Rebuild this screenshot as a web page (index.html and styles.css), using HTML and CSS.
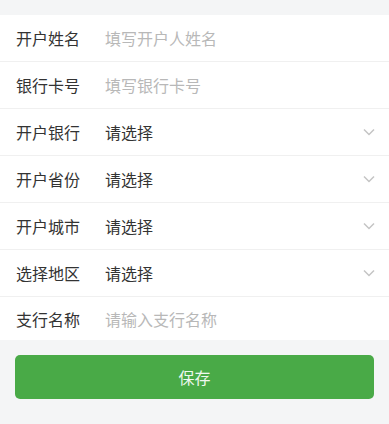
FILE: index.html
```html
<!DOCTYPE html>
<html lang="zh-CN">
<head>
    <meta charset="UTF-8">
    <meta name="viewport" content="width=device-width, initial-scale=1.0">
    <title>银行卡信息</title>
    <link rel="stylesheet" href="styles.css">
</head>
<body>
    <div class="form">
        <div class="row">
            <span class="label">开户姓名</span>
            <span class="field placeholder">填写开户人姓名</span>
        </div>
        <div class="row">
            <span class="label">银行卡号</span>
            <span class="field placeholder">填写银行卡号</span>
        </div>
        <div class="row">
            <span class="label">开户银行</span>
            <span class="field">请选择</span>
            <svg class="arrow" viewBox="0 0 12 8"><path d="M1 1.5 L6 6.5 L11 1.5" /></svg>
        </div>
        <div class="row">
            <span class="label">开户省份</span>
            <span class="field">请选择</span>
            <svg class="arrow" viewBox="0 0 12 8"><path d="M1 1.5 L6 6.5 L11 1.5" /></svg>
        </div>
        <div class="row">
            <span class="label">开户城市</span>
            <span class="field">请选择</span>
            <svg class="arrow" viewBox="0 0 12 8"><path d="M1 1.5 L6 6.5 L11 1.5" /></svg>
        </div>
        <div class="row">
            <span class="label">选择地区</span>
            <span class="field">请选择</span>
            <svg class="arrow" viewBox="0 0 12 8"><path d="M1 1.5 L6 6.5 L11 1.5" /></svg>
        </div>
        <div class="row">
            <span class="label">支行名称</span>
            <span class="field placeholder">请输入支行名称</span>
        </div>
    </div>
    <div class="actions">
        <button class="save">保存</button>
    </div>
</body>
</html>
```

FILE: styles.css
```css
body {
    margin: 0;
    padding-top: 15px;
    background: #f4f5f6;
    font-family: "Noto Sans CJK SC", "Noto Sans", sans-serif;
}
.form {
    background: #fff;
}
.row {
    display: flex;
    align-items: center;
    height: 46px;
    padding: 0 16px;
    border-bottom: 1px solid #f0f0f0;
}
.row:last-child {
    height: 43px;
    border-bottom: none;
}
.label {
    width: 89px;
    font-size: 16px;
    color: #333;
}
.field {
    flex: 1;
    font-size: 16px;
    color: #333;
}
.placeholder {
    color: #b8b8b8;
}
.arrow {
    width: 12px;
    height: 8px;
    margin-right: -2px;
}
.arrow path {
    fill: none;
    stroke: #c4c4c4;
    stroke-width: 1.5;
}
.actions {
    padding: 15px 15px;
}
.save {
    display: block;
    width: 100%;
    height: 44px;
    border: none;
    border-radius: 5px;
    background: #49aa47;
    color: #eef8ee;
    font-family: "Noto Sans CJK SC", sans-serif;
    font-size: 16px;
}
```
